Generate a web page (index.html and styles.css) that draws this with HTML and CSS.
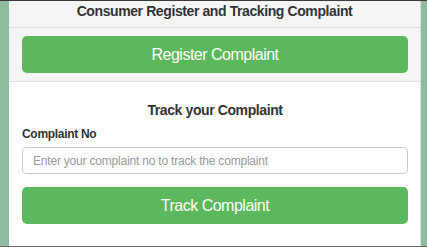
FILE: index.html
```html
<!DOCTYPE html>
<html lang="en">
<head>
  <meta charset="UTF-8">
  <meta name="viewport" content="width=device-width, initial-scale=1.0">
  <title>Consumer Complaint</title>
  <link rel="stylesheet" href="styles.css">
</head>
<body>

  <div class="frame">
    <div class="panel">
      <!-- Header -->
      <div class="header">Consumer Register and Tracking Complaint</div>

      <!-- Register -->
      <div class="register-box">
        <button class="btn-green" type="button">Register Complaint</button>
      </div>

      <!-- Track -->
      <div class="track-box">
        <h3>Track your Complaint</h3>
        <label for="complaintNo">Complaint No</label>
        <input type="text" id="complaintNo" placeholder="Enter your complaint no to track the complaint">
        <button class="btn-green" type="button">Track Complaint</button>
      </div>
    </div>
  </div>

</body>
</html>
```
FILE: styles.css
```css
* {
  box-sizing: border-box;
}
body, html {
  margin: 0;
  padding: 0;
  width: 100%;
  height: 100%;
  font-family: "Liberation Sans", Arial, sans-serif;
  color: #333;
  overflow: hidden;
}
.frame {
  height: 247px;
  background-color: #8dbc9e;
  border-top: 1px solid #3a3a3a;
  border-bottom: 1px solid #6a6a6a;
  padding: 0 6px 0 9px;
  display: flex;
}
.panel {
  flex: 1;
  background-color: #fff;
  border-right: 1px solid #ddd;
  display: flex;
  flex-direction: column;
}
.header {
  height: 27px;
  background-color: #f5f5f5;
  border-bottom: 1px solid #ddd;
  text-align: center;
  font-weight: bold;
  font-size: 14px;
  letter-spacing: -0.4px;
  line-height: 21px;
}
.register-box {
  background-color: #f5f5f5;
  border-bottom: 1px solid #e5e5e5;
  padding: 8px 12px 8px 13px;
}
.btn-green {
  display: block;
  width: 100%;
  height: 37px;
  background-color: #5cb85c;
  border: none;
  border-radius: 5px;
  color: #fff;
  font-family: "Liberation Sans", Arial, sans-serif;
  font-size: 16px;
  letter-spacing: -0.5px;
  cursor: pointer;
}
.track-box {
  padding: 0 12px 0 13px;
}
.track-box h3 {
  margin: 18px 0 0;
  text-align: center;
  font-size: 14px;
  letter-spacing: -0.4px;
  line-height: 20px;
}
.track-box label {
  display: block;
  margin-top: 5px;
  font-weight: bold;
  font-size: 12px;
  letter-spacing: -0.3px;
  line-height: 18px;
}
.track-box input {
  display: block;
  width: 100%;
  height: 27px;
  margin: 4px 0 13px;
  padding: 0 10px;
  border: 1px solid #ccc;
  border-radius: 4px;
  font-family: "Liberation Sans", Arial, sans-serif;
  font-size: 12px;
  letter-spacing: -0.2px;
  color: #555;
}
.track-box input::placeholder {
  color: #999;
}
```
